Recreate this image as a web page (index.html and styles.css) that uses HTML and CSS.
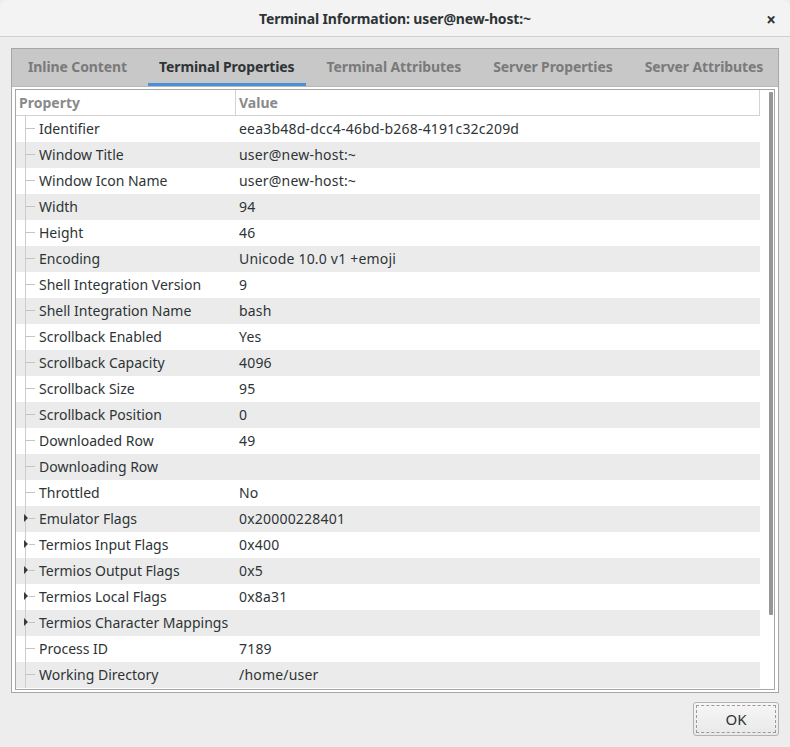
FILE: index.html
```html
<!DOCTYPE html>
<html>
<head>
<meta charset="utf-8">
<link rel="stylesheet" href="styles.css">
</head>
<body>
<div class="window">
  <div class="titlebar">
    <span class="title">Terminal Information: user@new-host:~</span>
    <span class="close">×</span>
  </div>
  <div class="content">
    <div class="panel">
      <div class="tabs">
        <div class="tab">Inline Content</div>
        <div class="tab active">Terminal Properties</div>
        <div class="tab">Terminal Attributes</div>
        <div class="tab">Server Properties</div>
        <div class="tab">Server Attributes</div>
      </div>
      <div class="panel-body">
        <div class="tree">
          <div class="tree-main">
            <div class="header">
              <div class="hcell prop">Property</div>
              <div class="hcell val">Value</div>
            </div>
            <div class="rows">
              <div class="row"><div class="cell prop"><span class="guide"></span><span class="tick"></span>Identifier</div><div class="cell val">eea3b48d-dcc4-46bd-b268-4191c32c209d</div></div>
              <div class="row"><div class="cell prop"><span class="guide"></span><span class="tick"></span>Window Title</div><div class="cell val">user@new-host:~</div></div>
              <div class="row"><div class="cell prop"><span class="guide"></span><span class="tick"></span>Window Icon Name</div><div class="cell val">user@new-host:~</div></div>
              <div class="row"><div class="cell prop"><span class="guide"></span><span class="tick"></span>Width</div><div class="cell val">94</div></div>
              <div class="row"><div class="cell prop"><span class="guide"></span><span class="tick"></span>Height</div><div class="cell val">46</div></div>
              <div class="row"><div class="cell prop"><span class="guide"></span><span class="tick"></span>Encoding</div><div class="cell val">Unicode 10.0 v1 +emoji</div></div>
              <div class="row"><div class="cell prop"><span class="guide"></span><span class="tick"></span>Shell Integration Version</div><div class="cell val">9</div></div>
              <div class="row"><div class="cell prop"><span class="guide"></span><span class="tick"></span>Shell Integration Name</div><div class="cell val">bash</div></div>
              <div class="row"><div class="cell prop"><span class="guide"></span><span class="tick"></span>Scrollback Enabled</div><div class="cell val">Yes</div></div>
              <div class="row"><div class="cell prop"><span class="guide"></span><span class="tick"></span>Scrollback Capacity</div><div class="cell val">4096</div></div>
              <div class="row"><div class="cell prop"><span class="guide"></span><span class="tick"></span>Scrollback Size</div><div class="cell val">95</div></div>
              <div class="row"><div class="cell prop"><span class="guide"></span><span class="tick"></span>Scrollback Position</div><div class="cell val">0</div></div>
              <div class="row"><div class="cell prop"><span class="guide"></span><span class="tick"></span>Downloaded Row</div><div class="cell val">49</div></div>
              <div class="row"><div class="cell prop"><span class="guide"></span><span class="tick"></span>Downloading Row</div><div class="cell val"></div></div>
              <div class="row"><div class="cell prop"><span class="guide"></span><span class="tick"></span>Throttled</div><div class="cell val">No</div></div>
              <div class="row"><div class="cell prop"><span class="guide"></span><span class="arrow"></span><span class="tick short"></span>Emulator Flags</div><div class="cell val">0x20000228401</div></div>
              <div class="row"><div class="cell prop"><span class="guide"></span><span class="arrow"></span><span class="tick short"></span>Termios Input Flags</div><div class="cell val">0x400</div></div>
              <div class="row"><div class="cell prop"><span class="guide"></span><span class="arrow"></span><span class="tick short"></span>Termios Output Flags</div><div class="cell val">0x5</div></div>
              <div class="row"><div class="cell prop"><span class="guide"></span><span class="arrow"></span><span class="tick short"></span>Termios Local Flags</div><div class="cell val">0x8a31</div></div>
              <div class="row"><div class="cell prop"><span class="guide"></span><span class="arrow"></span><span class="tick short"></span>Termios Character Mappings</div><div class="cell val"></div></div>
              <div class="row"><div class="cell prop"><span class="guide"></span><span class="tick"></span>Process ID</div><div class="cell val">7189</div></div>
              <div class="row"><div class="cell prop"><span class="guide"></span><span class="tick"></span>Working Directory</div><div class="cell val">/home/user</div></div>
            </div>
          </div>
          <div class="scroll"><div class="thumb"></div></div>
        </div>
      </div>
    </div>
    <div class="buttons">
      <button class="btn">OK</button>
    </div>
  </div>
</div>
</body>
</html>
```
FILE: styles.css
```css
html, body {
  margin: 0;
  padding: 0;
  background: #ededed;
  font-family: "Noto Sans", "DejaVu Sans", sans-serif;
  font-size: 14px;
  color: #2e3436;
}
.window {
  width: 790px;
  height: 747px;
  display: flex;
  flex-direction: column;
  background: #ededed;
  overflow: hidden;
}
.titlebar {
  height: 36px;
  flex: none;
  background: #f3f3f3;
  border-bottom: 1px solid #d0d0d0;
  border-radius: 8px 8px 0 0;
  display: flex;
  align-items: center;
  justify-content: center;
  position: relative;
}
.title {
  font-weight: bold;
  font-size: 14px;
  letter-spacing: -0.15px;
  color: #2e3436;
}
.close {
  position: absolute;
  right: 14px;
  top: 8px;
  font-weight: bold;
  font-size: 17px;
  color: #2e3436;
}
.content {
  padding: 11px 11px 0 11px;
  display: flex;
  flex-direction: column;
}
.panel {
  border: 1px solid #a6a6a6;
  height: 643px;
  display: flex;
  flex-direction: column;
  background: #ffffff;
}
.tabs {
  height: 37px;
  flex: none;
  background: #c8c8c8;
  display: flex;
  gap: 10px;
  padding-left: 5px;
  border-bottom: 1px solid #b8b8b8;
  overflow: hidden;
}
.tab {
  padding: 0 11px;
  display: flex;
  align-items: center;
  white-space: nowrap;
  flex: none;
  font-weight: bold;
  letter-spacing: -0.1px;
  color: #7a7a7a;
  border-bottom: 3px solid transparent;
  padding-top: 1px;
}
.tab.active {
  color: #2e3436;
  border-bottom-color: #4a90d9;
}
.panel-body {
  flex: 1;
  padding: 2px 3px 2px 3px;
  display: flex;
}
.tree {
  flex: 1;
  border: 1px solid #a6a6a6;
  display: flex;
  overflow: hidden;
}
.tree-main {
  width: 744px;
  display: flex;
  flex-direction: column;
}
.header {
  height: 25px;
  display: flex;
  border-bottom: 1px solid #d3d3d3;
  border-right: 1px solid #d3d3d3;
  font-weight: bold;
  color: #8a8a8a;
}
.hcell {
  display: flex;
  align-items: center;
  padding-bottom: 1px;
}
.hcell.prop {
  width: 216px;
  padding-left: 3px;
  border-right: 1px solid #d3d3d3;
}
.hcell.val {
  padding-left: 3px;
}
.rows {
  display: flex;
  flex-direction: column;
}
.row {
  height: 26px;
  display: flex;
  align-items: center;
}
.row:nth-child(even) {
  background: #ebebeb;
}
.cell {
  height: 26px;
  display: flex;
  align-items: center;
  white-space: nowrap;
  box-sizing: border-box;
  padding-bottom: 2px;
}
.cell.prop {
  width: 220px;
  position: relative;
  padding-left: 23px;
}
.cell.val {
  padding-left: 3px;
  letter-spacing: 0.2px;
}
.guide {
  position: absolute;
  left: 9px;
  top: 0;
  bottom: 0;
  width: 1px;
  background: #cccccc;
}
.tick {
  position: absolute;
  left: 10px;
  top: 12px;
  width: 9px;
  height: 1px;
  background: #c4c4c4;
}
.tick.short {
  left: 13px;
  width: 6px;
}
.arrow {
  position: absolute;
  left: 8px;
  top: 8px;
  width: 0;
  height: 0;
  border-top: 4px solid transparent;
  border-bottom: 4px solid transparent;
  border-left: 4px solid #3a3a3a;
}
.scroll {
  width: 14px;
  position: relative;
}
.thumb {
  position: absolute;
  left: 9px;
  top: 2px;
  width: 4px;
  height: 523px;
  background: #959795;
  border-radius: 1px;
}
.buttons {
  display: flex;
  justify-content: flex-end;
  padding-top: 9px;
}
.btn {
  width: 86px;
  height: 34px;
  border: 1px solid #b3b3b3;
  border-radius: 3px;
  background: linear-gradient(#f6f6f6, #e9e9e9);
  font-family: "Noto Sans", "DejaVu Sans", sans-serif;
  font-size: 15px;
  color: #2e3436;
  outline: 1px dashed #9a9a9a;
  outline-offset: -4px;
  padding: 0;
}
```
